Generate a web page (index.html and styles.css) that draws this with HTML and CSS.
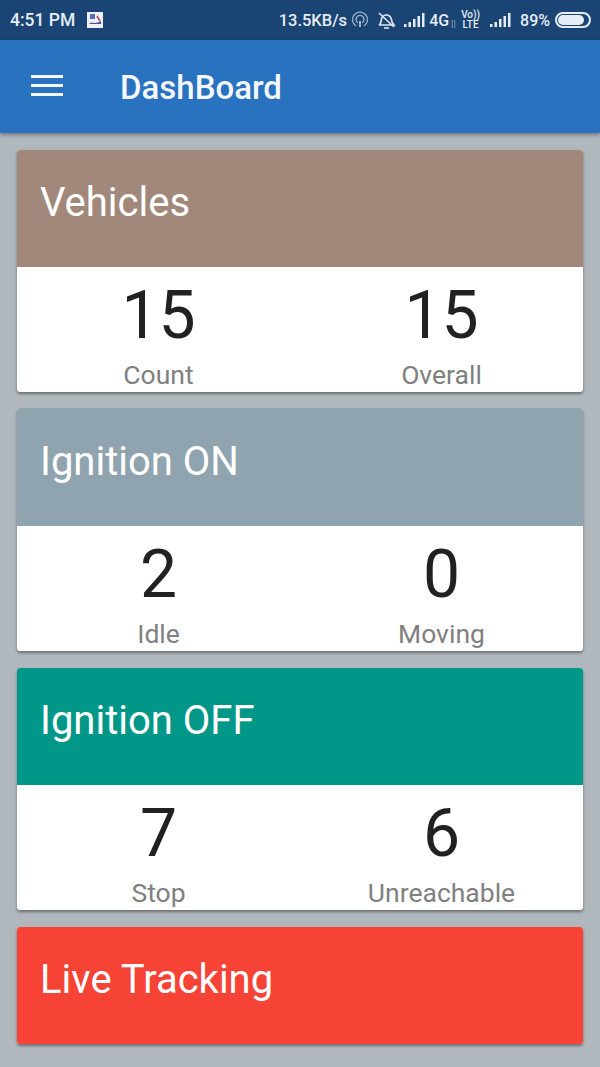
FILE: index.html
```html
<!DOCTYPE html>
<html lang="en">
<head>
    <meta charset="UTF-8">
    <title>DashBoard</title>
    <link rel="stylesheet" href="styles.css">
</head>
<body>
    <div class="status-bar">
        <div class="status-left">
            <span class="status-time">4:51 PM</span>
            <svg class="status-app" width="16" height="16" viewBox="0 0 16 16">
                <rect width="16" height="16" fill="#eef0f4"/>
                <path d="M3 2h5v5H3z" fill="#5a6cc0"/>
                <path d="M2 12c3-3 6 1 12-3v3H2z" fill="#4a4fa8"/>
                <path d="M10 4l3 5" stroke="#b04a5a" stroke-width="1.5"/>
            </svg>
        </div>
        <div class="status-right">
            <span class="status-speed">13.5KB/s</span>
            <svg class="status-icon" width="18" height="18" viewBox="0 0 18 18" fill="none" stroke="#9fb4c9" stroke-width="1.3">
                <path d="M5 15a7.500 7.500 0 1 1 8 0"/>
                <path d="M6.800 11.800a4 4 0 1 1 4.400 0"/>
                <path d="M9 10v6" stroke-width="2"/>
            </svg>
            <svg class="status-icon bell" width="19" height="19" viewBox="0 0 19 19" fill="none" stroke="#dfe7ef" stroke-width="1.600">
                <path d="M2 14c2-1 2-3 2.500-6a5 5 0 0 1 9.500-1c.5 3 1 5 3 7z"/>
                <path d="M7 17h5"/>
                <path d="M2 2l15 14"/>
            </svg>
            <svg class="status-icon signal" width="21" height="14" viewBox="0 0 21 14" fill="#e6edf4">
                <rect x="0" y="11" width="2.500" height="3"/>
                <rect x="4.500" y="9" width="2.500" height="5"/>
                <rect x="9" y="6" width="2.500" height="8"/>
                <rect x="13.500" y="3" width="2.500" height="11"/>
                <rect x="18" y="0" width="2.500" height="14"/>
            </svg>
            <span class="status-net">4G</span>
            <svg class="status-arrows" width="5" height="8" viewBox="0 0 5 8" stroke="#7f97b0" stroke-width="1">
                <path d="M1.200 0v8M3.800 0v8"/>
            </svg>
            <div class="status-volte"><span>Vo))</span><span>LTE</span></div>
            <svg class="status-icon signal" width="21" height="14" viewBox="0 0 21 14" fill="#e6edf4">
                <rect x="0" y="11" width="2.500" height="3"/>
                <rect x="4.500" y="9" width="2.500" height="5"/>
                <rect x="9" y="6" width="2.500" height="8"/>
                <rect x="13.500" y="3" width="2.500" height="11"/>
                <rect x="18" y="0" width="2.500" height="14"/>
            </svg>
            <span class="status-battery-text">89%</span>
            <div class="battery"><div class="battery-level"></div></div>
        </div>
    </div>

    <div class="toolbar">
        <div class="menu-icon">
            <span></span>
            <span></span>
            <span></span>
        </div>
        <div class="toolbar-title">DashBoard</div>
    </div>

    <div class="content">
        <div class="card">
            <div class="card-header brown">Vehicles</div>
            <div class="card-body">
                <div class="stat">
                    <div class="stat-value">15</div>
                    <div class="stat-label">Count</div>
                </div>
                <div class="stat">
                    <div class="stat-value">15</div>
                    <div class="stat-label">Overall</div>
                </div>
            </div>
        </div>

        <div class="card card-second">
            <div class="card-header slate">Ignition ON</div>
            <div class="card-body">
                <div class="stat">
                    <div class="stat-value">2</div>
                    <div class="stat-label">Idle</div>
                </div>
                <div class="stat">
                    <div class="stat-value">0</div>
                    <div class="stat-label">Moving</div>
                </div>
            </div>
        </div>

        <div class="card">
            <div class="card-header teal">Ignition OFF</div>
            <div class="card-body">
                <div class="stat">
                    <div class="stat-value">7</div>
                    <div class="stat-label">Stop</div>
                </div>
                <div class="stat">
                    <div class="stat-value">6</div>
                    <div class="stat-label">Unreachable</div>
                </div>
            </div>
        </div>

        <div class="card">
            <div class="card-header red">Live Tracking</div>
        </div>
    </div>
</body>
</html>
```

FILE: styles.css
```css
html, body {
    margin: 0;
    padding: 0;
}

body {
    width: 600px;
    height: 1067px;
    overflow: hidden;
    background: #b0b7bd;
    font-family: Roboto, "Liberation Sans", sans-serif;
}

.status-bar {
    height: 40px;
    background: #1a4473;
    color: #e6edf4;
    display: flex;
    align-items: center;
    justify-content: space-between;
    padding: 0 9px 0 10px;
    box-sizing: border-box;
    font-weight: 500;
}

.status-left {
    display: flex;
    align-items: center;
    gap: 12px;
}

.status-time {
    font-size: 17.500px;
}

.status-right {
    display: flex;
    align-items: center;
}

.status-speed {
    font-size: 16.500px;
    margin-right: 4px;
}

.status-icon {
    display: block;
}

.bell {
    margin-left: 8px;
}

.signal {
    margin-left: 8px;
}

.status-net {
    font-size: 16px;
    margin-left: 4px;
}

.status-arrows {
    margin: 7px 0 0 2px;
}

.status-volte {
    display: flex;
    flex-direction: column;
    align-items: center;
    font-size: 10px;
    line-height: 10px;
    margin: 0 2px 0 5px;
}

.status-battery-text {
    font-size: 16px;
    margin-left: 9px;
}

.battery {
    width: 36px;
    height: 16px;
    box-sizing: border-box;
    border: 2px solid #e6edf4;
    border-radius: 8px;
    padding: 1px;
    margin-left: 5px;
}

.battery-level {
    width: 88%;
    height: 100%;
    background: #e6edf4;
    border-radius: 5px;
}

.toolbar {
    height: 93px;
    background: #2872bf;
    display: flex;
    align-items: center;
    padding-left: 31px;
    box-sizing: border-box;
    box-shadow: 0 2px 4px rgba(0, 0, 0, 0.35);
    position: relative;
}

.menu-icon {
    width: 32px;
    display: flex;
    flex-direction: column;
    gap: 6px;
    margin-right: 58px;
    margin-bottom: 3px;
}

.menu-icon span {
    display: block;
    height: 3px;
    background: #f4f8fc;
}

.toolbar-title {
    color: #f4f8fc;
    font-size: 33px;
    font-weight: 500;
    margin-bottom: -2px;
    margin-left: -1px;
}

.content {
    padding: 17px 17px 0;
    display: flex;
    flex-direction: column;
    gap: 17px;
}

.card {
    border-radius: 3px;
    overflow: hidden;
    background: #fff;
    box-shadow: 0 2px 3px rgba(0, 0, 0, 0.4);
}

/* this one sits a pixel higher and is a pixel taller */
.card-second {
    margin-top: -1px;
}

.card-second .card-header {
    height: 118px;
    padding-top: 31px;
}

.card-header {
    height: 117px;
    box-sizing: border-box;
    padding: 30px 0 0 23px;
    color: #fff;
    font-size: 40px;
    line-height: 46px;
}

.brown {
    background: #a1887b;
}

.slate {
    background: #8fa4ae;
}

.teal {
    background: #009788;
}

.red {
    background: #f64336;
}

.card-body {
    height: 125px;
    display: flex;
}

.stat {
    flex: 1;
    display: flex;
    flex-direction: column;
    align-items: center;
}

.stat-value {
    color: #212121;
    font-size: 66px;
    line-height: 78px;
    margin-top: 10px;
}

.stat-label {
    color: #808080;
    font-size: 26.500px;
    line-height: 30px;
    margin-top: 5px;
}
```
